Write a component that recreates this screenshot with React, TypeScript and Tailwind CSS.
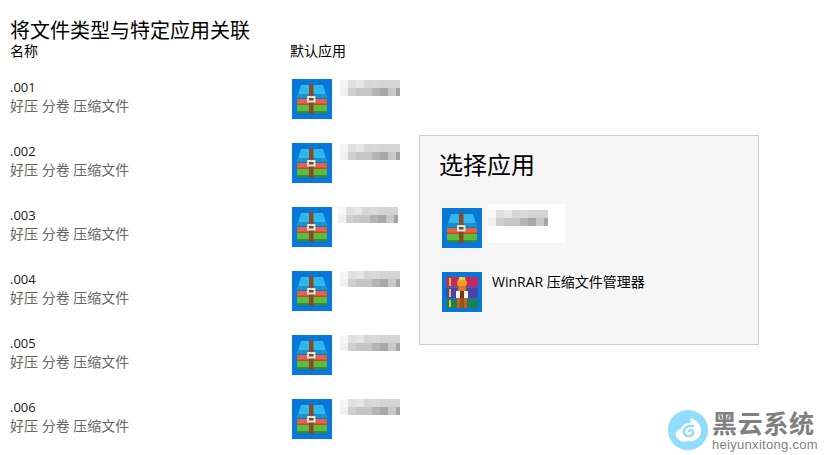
const mosaicTop = ['#f6f6f6', '#dfdfdf', '#e6e6e6', '#d6d6d6', '#d9d9d9', '#d4d4d4', '#d4d4d4'];
const mosaicBottom = ['#f0f0f0', '#cfcfcf', '#c6c6c6', '#c6c6c6', '#b4b4b4', '#a8a8a8', '#c8c8c8', '#a4a4a4'];

const files = [
  { ext: '.001', offset: 'ml-2', top: 'mt-px' },
  { ext: '.002', offset: 'ml-2', top: 'mt-px' },
  { ext: '.003', offset: 'ml-1.5', top: 'mt-0' },
  { ext: '.004', offset: 'ml-2', top: 'mt-0' },
  { ext: '.005', offset: 'ml-2', top: 'mt-0' },
  { ext: '.006', offset: 'ml-2', top: 'mt-0' },
];

function HaoyaIcon() {
  return (
    <svg width="40" height="40" viewBox="0 0 40 40" className="shrink-0">
      <rect width="40" height="40" fill="#0878d8" />
      <path d="M9 6h22l4 13H5z" fill="#30b8ec" />
      <path d="M5 15h30v4H5z" fill="#1a90cc" />
      <rect x="5" y="20" width="30" height="6" fill="#e8603c" />
      <rect x="5" y="24.5" width="30" height="1.5" fill="#bd4c30" />
      <rect x="5" y="26" width="30" height="8" fill="#5cbc3c" />
      <rect x="5" y="32" width="30" height="2" fill="#3c8c2c" />
      <path d="M17 5h4.5v30h-4.5z" fill="#8a4b24" />
      <rect x="15" y="17" width="8.5" height="6.5" fill="#e6e2da" />
      <rect x="17" y="19" width="4.5" height="2.5" fill="#6a4a30" />
    </svg>
  );
}

function WinrarIcon() {
  return (
    <svg width="40" height="40" viewBox="0 0 40 40" className="shrink-0">
      <rect width="40" height="40" fill="#0878d8" />
      <rect x="4" y="5" width="32" height="10" rx="2" fill="#c8285c" />
      <rect x="4" y="16" width="32" height="10" rx="2" fill="#4a44a8" />
      <rect x="4" y="27" width="32" height="9" rx="2" fill="#1c8050" />
      <rect x="7" y="6" width="2" height="8" fill="#f0c030" />
      <rect x="7" y="17" width="2" height="8" fill="#f0c030" />
      <rect x="7" y="28" width="2" height="7" fill="#f0c030" />
      <circle cx="20" cy="11" r="5" fill="#f0a020" />
      <rect x="17" y="5" width="6" height="3" fill="#f8c848" />
      <rect x="16" y="14" width="8" height="5" fill="#d87a28" />
      <rect x="14" y="19" width="12" height="7" fill="#f4f0ea" />
      <rect x="18" y="19" width="4" height="7" fill="#703818" />
      <rect x="15" y="26" width="10" height="10" fill="#c06424" />
      <rect x="18" y="26" width="4" height="10" fill="#a04c18" />
    </svg>
  );
}

function Mosaic() {
  return (
    <svg width="60" height="16" viewBox="0 0 60 16" shapeRendering="crispEdges" className="block shrink-0">
      {mosaicTop.map((c, i) => (
        <rect key={i} x={i * 8} y="0" width={i === 6 ? 12 : 8} height="8" fill={c} />
      ))}
      {mosaicBottom.map((c, i) => (
        <rect key={i} x={i * 8} y="8" width={i === 7 ? 4 : 8} height="8" fill={c} />
      ))}
    </svg>
  );
}

function Watermark() {
  return (
    <div className="absolute left-[668px] top-[410px] flex gap-1">
      <svg width="40" height="40" viewBox="0 0 40 40">
        <circle cx="20" cy="20" r="20" fill="#8fdcfb" />
        <path
          d="M22 8C30 10 34 16 33 23 32 29 26 32 20 31 16 33 10 31 8 26 7 22 10 19 13 19 14 15 18 13 22 13 23 12 23 10 22 8Z"
          fill="#fff"
        />
        <path
          d="M25 16C19 15 15 19 16 23 17 27 23 27 25 24 26 21 23 19 21 21"
          fill="none"
          stroke="#8fdcfb"
          strokeWidth="2.4"
          strokeLinecap="round"
        />
      </svg>
      <div className="flex w-[106px] flex-col">
        <div className="text-[25px] leading-[27px] font-bold tracking-[0.7px] text-[#808080]">黑云系统</div>
        <div className="font-['Liberation_Sans',sans-serif] text-[13px] leading-[15px] tracking-[0.3px] text-[#808080]">
          heiyunxitong.com
        </div>
      </div>
    </div>
  );
}

export default function App() {
  return (
    <div className="relative h-[455px] w-[831px] overflow-hidden bg-white px-2.5 pt-[19px] font-['Open_Sans','Noto_Sans_CJK_SC',sans-serif] text-black">
      <h1 className="text-[20px] leading-[23px] font-normal">将文件类型与特定应用关联</h1>
      <div className="flex text-[14px] leading-[18px]">
        <div className="w-[280px]">名称</div>
        <div>默认应用</div>
      </div>

      <div className="mt-[18px] flex flex-col">
        {files.map((f) => (
          <div key={f.ext} className="flex h-16">
            <div className="-mt-px w-[282px]">
              <div className="text-[13px] leading-[20px] text-[#1a1a1a]">{f.ext}</div>
              <div className="-mt-px text-[14px] leading-[19px] text-[#666]">好压 分卷 压缩文件</div>
            </div>
            <div className="flex items-start pt-[1px]">
              <HaoyaIcon />
              <div className={`${f.offset} ${f.top}`}>
                <Mosaic />
              </div>
            </div>
          </div>
        ))}
      </div>

      <div className="absolute left-[419px] top-[135px] h-[210px] w-[340px] border border-[#cccccc] bg-[#f6f6f6] pl-[19px]">
        <h2 className="mt-[13px] text-[24px] leading-[32px] font-normal">选择应用</h2>
        <div className="mt-[26px] ml-[3px] flex items-start">
          <div className="mt-[1px]">
            <HaoyaIcon />
          </div>
          <div className="-mt-[3px] ml-1.5 h-[39px] w-[77px] bg-white pt-[6px]">
            <Mosaic />
          </div>
        </div>
        <div className="mt-[24px] ml-[3px] flex items-start">
          <WinrarIcon />
          <div className="ml-2.5 text-[14px] leading-[20px]">WinRAR 压缩文件管理器</div>
        </div>
      </div>

      <Watermark />
    </div>
  );
}
